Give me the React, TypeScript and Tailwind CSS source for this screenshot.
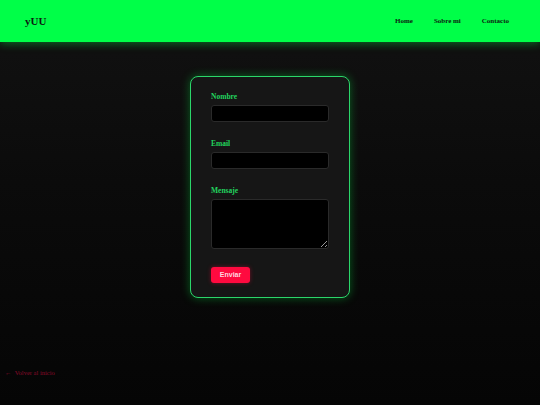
const serif = "font-['Liberation_Serif','Times_New_Roman',serif]";

const Field = ({ label, children }: { label: string; children: React.ReactNode }) => (
  <div className="flex flex-col">
    <label className={`${serif} text-[7.5px] leading-[8px] font-bold text-[#22d35e] mb-[4px]`}>{label}</label>
    {children}
  </div>
);

const App = () => {
  return (
    <div className="min-h-[405px] bg-[linear-gradient(180deg,#121212_0%,#0b0b0b_45%,#050505_100%)] flex flex-col">
      <header className="h-[42px] bg-[#00ff48] flex items-center justify-between pl-[25px] pr-[31px] shadow-[0_2px_8px_rgba(0,255,72,0.35)]">
        <span className={`${serif} text-[11px] font-bold text-[#0c1a10]`}>yUU</span>
        <nav className={`${serif} flex gap-[21px] text-[7px] font-bold text-[#0c1a10]`}>
          <a>Home</a>
          <a>Sobre mi</a>
          <a>Contacto</a>
        </nav>
      </header>

      <main className="flex justify-center pt-[34px]">
        <form className="w-[160px] h-[222px] rounded-[8px] border-[1.5px] border-[#2bd66a] bg-[#161616] shadow-[0_0_10px_rgba(0,255,72,0.35)] px-[20px] pt-[16px] flex flex-col">
          <Field label="Nombre">
            <input className="h-[17px] rounded-[3px] bg-black border border-[#2a2a2a]" />
          </Field>
          <div className="h-[18px] shrink-0" />
          <Field label="Email">
            <input className="h-[17px] rounded-[3px] bg-black border border-[#2a2a2a]" />
          </Field>
          <div className="h-[18px] shrink-0" />
          <Field label="Mensaje">
            <textarea className="h-[50px] rounded-[3px] bg-black border border-[#2a2a2a]" />
          </Field>
          <div className="h-[18px] shrink-0" />
          <button
            type="button"
            className="self-start w-[39px] h-[16px] rounded-[3px] bg-[#ff0a3f] text-[#ffd6df] text-[7px] font-bold font-['Liberation_Sans',Arial,sans-serif] shadow-[0_0_4px_rgba(255,10,63,0.4)]"
          >
            Enviar
          </button>
        </form>
      </main>

      <a className={`${serif} mt-[70px] ml-[5px] text-[6.5px] text-[#8a0a2a]`}>
        ←&nbsp;&nbsp;Volver al inicio
      </a>
    </div>
  );
};

export default App;
